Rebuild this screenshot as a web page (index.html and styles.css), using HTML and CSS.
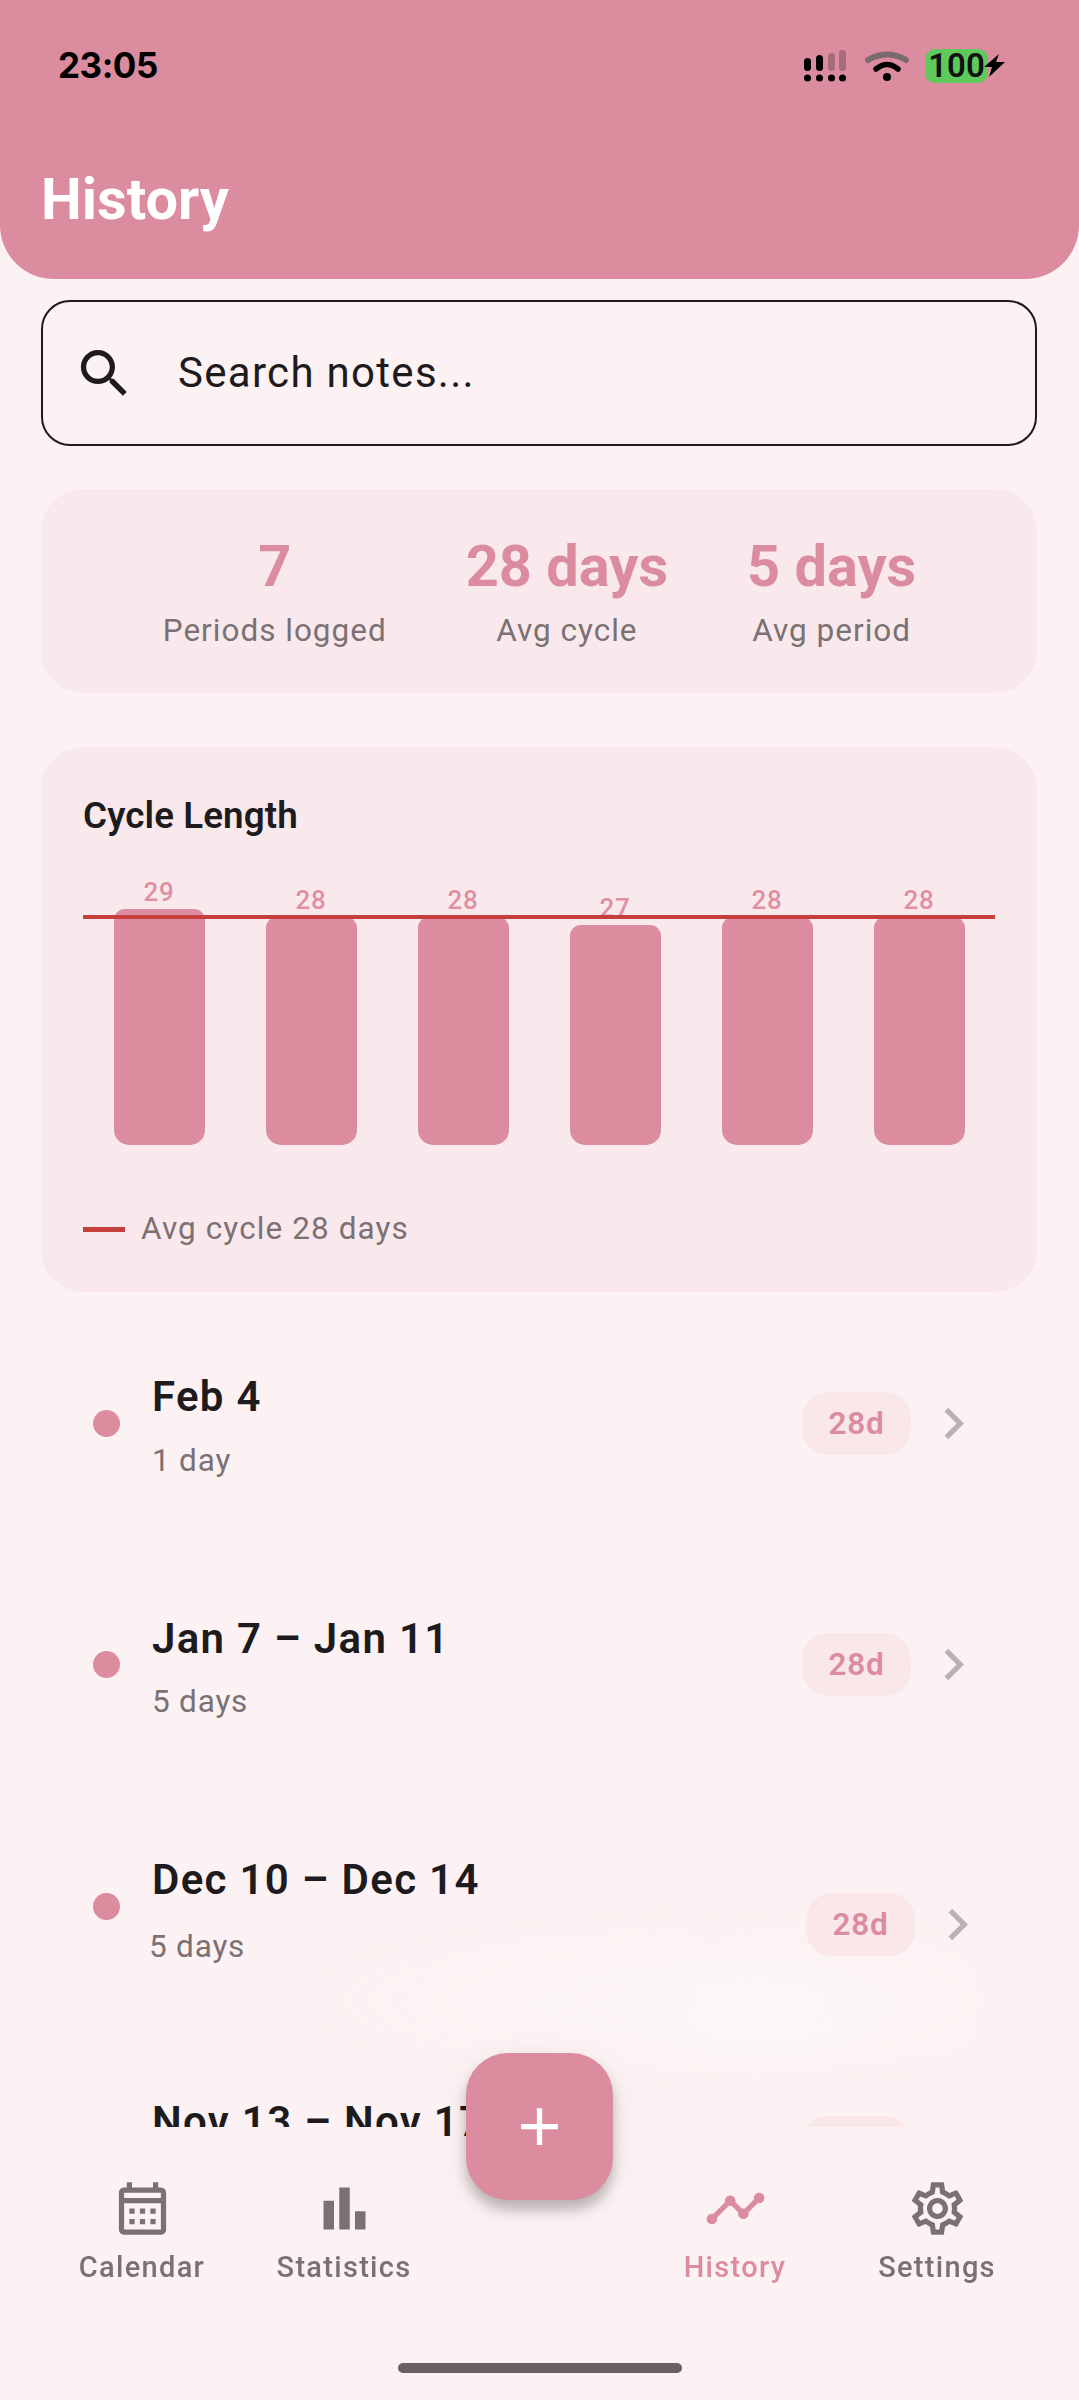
FILE: index.html
```html
<!DOCTYPE html>
<html>
    <head>
        <meta charset="utf-8">
        <title>History</title>
        <link rel="stylesheet" href="styles.css">
    </head>
    <body>
        <div class="page">
            <header class="app-header">
                <div class="status-bar">
                    <span class="clock">23:05</span>
                    <div class="status-icons">
                        <svg class="signal" width="42" height="32" viewBox="0 0 42 32">
                            <rect x="0" y="8" width="7" height="13" rx="3.5" fill="#000"/>
                            <rect x="12" y="5" width="7" height="16" rx="3.5" fill="#000"/>
                            <rect x="24" y="3" width="7" height="18" rx="3.5" fill="#a66c7a"/>
                            <rect x="35" y="0" width="7" height="21" rx="3.5" fill="#a66c7a"/>
                            <circle cx="3.5" cy="28" r="3.5" fill="#000"/>
                            <circle cx="15.5" cy="28" r="3.5" fill="#000"/>
                            <circle cx="27.5" cy="28" r="3.5" fill="#000"/>
                            <circle cx="38.5" cy="28" r="3.5" fill="#000"/>
                        </svg>
                        <svg class="wifi" width="44" height="32" viewBox="0 0 44 32">
                            <path d="M3 10 Q22 -1 41 10" fill="none" stroke="#7d6a70" stroke-width="6" stroke-linecap="round"/>
                            <path d="M11 19 Q22 10 33 19" fill="none" stroke="#000" stroke-width="5.5" stroke-linecap="round"/>
                            <circle cx="22" cy="27" r="4" fill="#000"/>
                        </svg>
                        <div class="battery">
                            <span class="battery-level">100</span>
                            <svg class="bolt" width="21" height="23" viewBox="0 0 21 23">
                                <path d="M15 0 L0 13 H8 L5 23 L21 8 H12 Z" fill="#000"/>
                            </svg>
                        </div>
                    </div>
                </div>
                <h1 class="page-title">History</h1>
            </header>

            <main class="content">
                <div class="smudge"></div>

                <div class="search-box">
                    <svg class="icon" viewBox="0 0 24 24"><path fill="#1d1b1e" d="M15.5 14h-.79l-.28-.27C15.41 12.59 16 11.11 16 9.5 16 5.91 13.09 3 9.5 3S3 5.91 3 9.5 5.91 16 9.5 16c1.61 0 3.09-.59 4.23-1.57l.27.28v.79l5 4.99L20.49 19l-4.99-5zm-6 0C7.01 14 5 11.99 5 9.5S7.01 5 9.5 5 14 7.01 14 9.5 11.99 14 9.5 14z"/></svg>
                    <span class="search-hint">Search notes...</span>
                </div>

                <section class="card stats">
                    <div class="stat">
                        <div class="stat-value">7</div>
                        <div class="stat-label">Periods logged</div>
                    </div>
                    <div class="stat">
                        <div class="stat-value">28 days</div>
                        <div class="stat-label">Avg cycle</div>
                    </div>
                    <div class="stat">
                        <div class="stat-value">5 days</div>
                        <div class="stat-label">Avg period</div>
                    </div>
                </section>

                <section class="card chart-card">
                    <h2 class="chart-title">Cycle Length</h2>
                    <div class="chart">
                        <div class="chart-col"><span class="bar-value">29</span><div class="bar bar-29"></div></div>
                        <div class="chart-col"><span class="bar-value">28</span><div class="bar bar-28"></div></div>
                        <div class="chart-col"><span class="bar-value">28</span><div class="bar bar-28"></div></div>
                        <div class="chart-col"><span class="bar-value">27</span><div class="bar bar-27"></div></div>
                        <div class="chart-col"><span class="bar-value">28</span><div class="bar bar-28"></div></div>
                        <div class="chart-col"><span class="bar-value">28</span><div class="bar bar-28"></div></div>
                        <div class="avg-line"></div>
                    </div>
                    <div class="legend">
                        <span class="legend-mark"></span>
                        <span class="legend-text">Avg cycle 28 days</span>
                    </div>
                </section>

                <ul class="periods">
                    <li class="period">
                        <span class="dot"></span>
                        <div class="period-text">
                            <div class="period-dates">Feb 4</div>
                            <div class="period-length">1 day</div>
                        </div>
                        <span class="pill">28d</span>
                        <svg class="icon chevron" viewBox="0 0 24 24"><path d="M10 6 8.59 7.41 13.17 12l-4.58 4.59L10 18l6-6z"/></svg>
                    </li>
                    <li class="period">
                        <span class="dot"></span>
                        <div class="period-text">
                            <div class="period-dates">Jan 7 – Jan 11</div>
                            <div class="period-length">5 days</div>
                        </div>
                        <span class="pill">28d</span>
                        <svg class="icon chevron" viewBox="0 0 24 24"><path d="M10 6 8.59 7.41 13.17 12l-4.58 4.59L10 18l6-6z"/></svg>
                    </li>
                    <li class="period period-moving">
                        <span class="dot"></span>
                        <div class="period-text">
                            <div class="period-dates">Dec 10 – Dec 14</div>
                            <div class="period-length">5 days</div>
                        </div>
                        <span class="pill">28d</span>
                        <svg class="icon chevron" viewBox="0 0 24 24"><path d="M10 6 8.59 7.41 13.17 12l-4.58 4.59L10 18l6-6z"/></svg>
                    </li>
                    <li class="period">
                        <span class="dot"></span>
                        <div class="period-text">
                            <div class="period-dates">Nov 13 – Nov 17</div>
                            <div class="period-length">5 days</div>
                        </div>
                        <span class="pill">28d</span>
                        <svg class="icon chevron" viewBox="0 0 24 24"><path d="M10 6 8.59 7.41 13.17 12l-4.58 4.59L10 18l6-6z"/></svg>
                    </li>
                </ul>
            </main>

            <nav class="bottom-bar">
                <div class="nav-items">
                    <div class="nav-item">
                        <svg class="icon" viewBox="0 0 24 24"><path d="M19 4h-1V2h-2v2H8V2H6v2H5c-1.1 0-2 .9-2 2v14c0 1.1.9 2 2 2h14c1.1 0 2-.9 2-2V6c0-1.1-.9-2-2-2zm0 16H5V10h14v10zm0-12H5V6h14v2zM7 12h2v2H7zm4 0h2v2h-2zm4 0h2v2h-2zM7 16h2v2H7zm4 0h2v2h-2zm4 0h2v2h-2z"/></svg>
                        <span class="nav-label">Calendar</span>
                    </div>
                    <div class="nav-item">
                        <svg class="icon" viewBox="0 0 24 24"><path d="M4 9h4v11H4zm12 4h4v7h-4zm-6-9h4v16h-4z"/></svg>
                        <span class="nav-label">Statistics</span>
                    </div>
                    <div class="nav-gap"></div>
                    <div class="nav-item nav-active">
                        <svg class="icon" viewBox="0 0 24 24"><path d="M23 8c0 1.1-.9 2-2 2-.18 0-.35-.02-.51-.07l-3.56 3.55c.05.16.07.34.07.52 0 1.1-.9 2-2 2s-2-.9-2-2c0-.18.02-.36.07-.52l-2.55-2.55c-.16.05-.34.07-.52.07s-.36-.02-.52-.07l-4.55 4.56c.05.16.07.33.07.51 0 1.1-.9 2-2 2s-2-.9-2-2 .9-2 2-2c.18 0 .35.02.51.07l4.56-4.55C8.02 9.36 8 9.18 8 9c0-1.1.9-2 2-2s2 .9 2 2c0 .18-.02.36-.07.52l2.55 2.55c.16-.05.34-.07.52-.07s.36.02.52.07l3.55-3.56C19.02 8.35 19 8.18 19 8c0-1.1.9-2 2-2s2 .9 2 2z"/></svg>
                        <span class="nav-label">History</span>
                    </div>
                    <div class="nav-item">
                        <svg class="icon" viewBox="0 0 24 24"><path d="M19.43 12.98c.04-.32.07-.64.07-.98 0-.34-.03-.66-.07-.98l2.11-1.65c.19-.15.24-.42.12-.64l-2-3.46c-.09-.16-.26-.25-.44-.25-.06 0-.12.01-.17.03l-2.49 1c-.52-.4-1.08-.73-1.69-.98l-.38-2.65C14.46 2.18 14.25 2 14 2h-4c-.25 0-.46.18-.49.42l-.38 2.65c-.61.25-1.17.59-1.69.98l-2.49-1c-.06-.02-.12-.03-.18-.03-.17 0-.34.09-.43.25l-2 3.46c-.13.22-.07.49.12.64l2.11 1.65c-.04.32-.07.65-.07.98 0 .33.03.66.07.98l-2.11 1.65c-.19.15-.24.42-.12.64l2 3.46c.09.16.26.25.44.25.06 0 .12-.01.17-.03l2.49-1c.52.4 1.08.73 1.69.98l.38 2.65c.03.24.24.42.49.42h4c.25 0 .46-.18.49-.42l.38-2.65c.61-.25 1.17-.59 1.69-.98l2.49 1c.06.02.12.03.18.03.17 0 .34-.09.43-.25l2-3.46c.12-.22.07-.49-.12-.64l-2.11-1.65zm-1.98-1.71c.04.31.05.52.05.73 0 .21-.02.43-.05.73l-.14 1.13.89.7 1.08.84-.7 1.21-1.27-.51-1.04-.42-.9.68c-.43.32-.84.56-1.25.73l-1.06.43-.16 1.13-.2 1.35h-1.4l-.19-1.35-.16-1.13-1.06-.43c-.43-.18-.83-.41-1.23-.71l-.91-.7-1.06.43-1.27.51-.7-1.21 1.08-.84.89-.7-.14-1.13c-.03-.31-.05-.54-.05-.74s.02-.43.05-.73l.14-1.13-.89-.7-1.08-.84.7-1.21 1.27.51 1.04.42.9-.68c.43-.32.84-.56 1.25-.73l1.06-.43.16-1.13.2-1.35h1.39l.19 1.35.16 1.13 1.06.43c.43.18.83.41 1.23.71l.91.7 1.06-.43 1.27-.51.7 1.21-1.07.85-.89.7.14 1.13zM12 8c-2.21 0-4 1.79-4 4s1.79 4 4 4 4-1.79 4-4-1.79-4-4-4zm0 6c-1.1 0-2-.9-2-2s.9-2 2-2 2 .9 2 2-.9 2-2 2z"/></svg>
                        <span class="nav-label">Settings</span>
                    </div>
                </div>
                <div class="home-indicator"></div>
            </nav>

            <button class="fab">
                <svg class="icon" viewBox="0 0 24 24"><path fill="#fff" d="M19 13h-6v6h-2v-6H5v-2h6V5h2v6h6v2z"/></svg>
            </button>
        </div>
    </body>
</html>
```

FILE: styles.css
```css
* {
    box-sizing: border-box;
}
html, body {
    margin: 0;
    padding: 0;
}
body {
    font-family: Roboto, sans-serif;
    color: #1d1b1e;
    background: #fdf2f3;
}
.page {
    position: relative;
    display: flex;
    flex-direction: column;
    width: 1079px;
    height: 2400px;
    overflow: hidden;
}
.icon {
    display: block;
    width: 63px;
    height: 63px;
    flex: none;
}

/* header */
.app-header {
    position: relative;
    z-index: 2;
    height: 279px;
    flex: none;
    padding: 0 41px;
    background: #db8c9e;
    border-radius: 0 0 54px 54px;
}
.status-bar {
    display: flex;
    justify-content: space-between;
    align-items: flex-start;
    padding: 43px 33px 0 17px;
    height: 165px;
}
.clock {
    font-family: Inter, sans-serif;
    font-size: 35px;
    font-weight: 700;
    line-height: 44px;
    letter-spacing: -0.5px;
    color: #000;
}
.status-icons {
    display: flex;
    align-items: flex-start;
    padding-top: 6px;
}
.signal {
    margin-top: 1px;
}
.wifi {
    margin-left: 19px;
    margin-top: 1px;
}
.battery {
    display: flex;
    align-items: flex-start;
    margin-left: 16px;
}
.battery-level {
    width: 63px;
    height: 34px;
    background: #5fc95c;
    border-radius: 10px;
    font-size: 33px;
    font-weight: 600;
    line-height: 34px;
    text-align: center;
    color: #111;
}
.bolt {
    margin: 5px 0 0 -4px;
}
.page-title {
    margin: 0;
    font-size: 57.75px;
    font-weight: 700;
    line-height: 68px;
    color: #fff;
}

/* main column */
.content {
    position: relative;
    flex: 1;
    padding: 21px 42px 0 41px;
    overflow: hidden;
}
.smudge {
    position: absolute;
    left: 300px;
    top: 1640px;
    width: 680px;
    height: 150px;
    background: radial-gradient(ellipse 130px 60px at 68% 62%, #fbf8f8 0, transparent 100%), radial-gradient(ellipse at 60% 55%, #fbf5f6 0, transparent 75%);
    filter: blur(12px);
}
.search-box {
    position: relative;
    display: flex;
    align-items: center;
    height: 146px;
    padding-left: 30px;
    border: 2px solid #1d1b1e;
    border-radius: 29px;
}
.search-hint {
    margin-left: 42px;
    padding-bottom: 2px;
    font-size: 42px;
    letter-spacing: 1.3px;
    color: #1d1b1e;
}
.card {
    position: relative;
    background: #f9e9ec;
    border-radius: 42px;
}

/* stats */
.stats {
    display: flex;
    justify-content: center;
    gap: 79px;
    height: 204px;
    margin-top: 43px;
    padding: 43px 0 0 1px;
}
.stat {
    text-align: center;
}
.stat-value {
    font-size: 57.75px;
    font-weight: 700;
    line-height: 68px;
    color: #db8c9e;
}
.stat-label {
    margin-top: 11px;
    font-size: 31.5px;
    line-height: 40px;
    letter-spacing: 1px;
    color: #7b7175;
}

/* chart */
.chart-card {
    height: 545px;
    margin-top: 54px;
    padding: 47px 42px 0 42px;
}
.chart-title {
    margin: 0;
    font-size: 36.75px;
    font-weight: 600;
    line-height: 44px;
    letter-spacing: 0.1px;
}
.chart {
    position: relative;
    display: flex;
    align-items: flex-end;
    height: 307px;
}
.chart-col {
    display: flex;
    flex-direction: column;
    align-items: center;
    width: 152px;
}
.bar-value {
    font-size: 26px;
    font-weight: 500;
    line-height: 30px;
    letter-spacing: 0.6px;
    margin-bottom: 2px;
    color: #e090a3;
}
.bar {
    width: 91px;
    background: #db8c9e;
    border-radius: 11px 11px 15px 15px;
}
.bar-29 {
    height: 236px;
}
.bar-28 {
    height: 228px;
}
.bar-27 {
    height: 220px;
}
.avg-line {
    position: absolute;
    left: 0;
    right: 0;
    bottom: 226px;
    height: 4px;
    background: #c73f3c;
}
.legend {
    display: flex;
    align-items: center;
    gap: 16px;
    margin-top: 64px;
}
.legend-mark {
    width: 42px;
    height: 5px;
    background: #c73f3c;
}
.legend-text {
    font-size: 31.5px;
    line-height: 40px;
    letter-spacing: 1.1px;
    color: #7b7175;
}

/* period list */
.periods {
    position: relative;
    list-style: none;
    margin: 10.5px 0 0 0;
    padding: 0;
}
.period {
    display: flex;
    align-items: center;
    height: 241.5px;
    padding: 0 52px 0 52px;
}
.dot {
    width: 27px;
    height: 27px;
    flex: none;
    border-radius: 50%;
    background: #db8c9e;
}
.period-text {
    flex: 1;
    margin-left: 32px;
}
.period-dates {
    padding-top: 3.5px;
    font-size: 42px;
    font-weight: 600;
    line-height: 56px;
    letter-spacing: 1.3px;
}
.period-length {
    margin-top: 15.5px;
    font-size: 31.5px;
    line-height: 40px;
    letter-spacing: 0.8px;
    color: #7b7175;
}
.pill {
    width: 109px;
    height: 63px;
    flex: none;
    background: #f9e7ea;
    border-radius: 26px;
    font-size: 31.5px;
    font-weight: 600;
    line-height: 63px;
    letter-spacing: 0.8px;
    text-align: center;
    color: #db8c9e;
}
.chevron {
    margin-left: 11px;
    fill: #b9b1b5;
}

/* the third row is caught mid-animation in the capture */
.period-moving {
    padding-right: 48px;
}
.period-moving .period-length {
    margin: 18.5px 0 -3px -3px;
}
.period-moving .pill {
    margin-top: 37px;
    margin-left: 4px;
}
.period-moving .chevron {
    margin-top: 37px;
}

/* bottom bar, cut by a round notch around the fab */
.bottom-bar {
    position: absolute;
    left: 0;
    right: 0;
    bottom: 0;
    z-index: 3;
    height: 273px;
    padding-top: 50px;
    background: #fdf2f3;
    -webkit-mask: radial-gradient(circle at 539.5px 0, transparent 99.5px, #000 100px);
    mask: radial-gradient(circle at 539.5px 0, transparent 99.5px, #000 100px);
}
.nav-items {
    display: grid;
    grid-template-columns: 202px 202px 1fr 202px 202px;
    padding: 0 41px;
}
.nav-item {
    display: flex;
    flex-direction: column;
    align-items: center;
    fill: #7b7175;
    color: #7b7175;
}
.nav-label {
    margin-top: 8.5px;
    font-size: 29px;
    font-weight: 500;
    line-height: 36px;
    letter-spacing: 1.3px;
}
.nav-active {
    fill: #db8c9e;
    color: #db8c9e;
}
.home-indicator {
    width: 284px;
    height: 10px;
    margin: 78.5px auto 0 auto;
    border-radius: 5px;
    background: #686061;
}
.fab {
    position: absolute;
    left: 466px;
    top: 2053px;
    z-index: 4;
    display: flex;
    align-items: center;
    justify-content: center;
    width: 147px;
    height: 147px;
    padding: 0;
    border: none;
    border-radius: 42px;
    background: #db8c9e;
    box-shadow: 0 10px 12px rgba(0, 0, 0, 0.22), 0 6px 32px rgba(0, 0, 0, 0.08);
}
```
